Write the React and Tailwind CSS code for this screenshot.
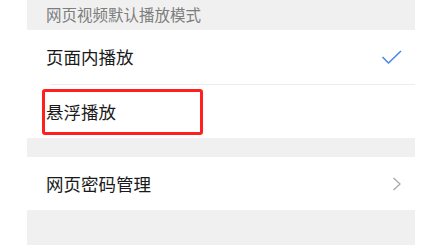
export default function App() {
  const font = { fontFamily: '"Noto Sans CJK SC", "Noto Sans", sans-serif' };
  return (
    <div className="w-[436px] h-[245px] bg-white overflow-hidden" style={font}>
      <div className="relative ml-[27px] w-[388px] h-[245px] bg-[#f0f0f0] flex flex-col">
        <div className="h-[30px] flex items-center pl-[19px] text-[15.5px] leading-none text-[#7d7d7d]">
          网页视频默认播放模式
        </div>
        <div className="bg-white">
          <div className="h-[54px] flex items-center justify-between pl-[19px] pr-[12px]">
            <span className="text-[17.5px] leading-none text-[#1a1a1a]">页面内播放</span>
            <svg width="22" height="16" viewBox="0 0 22 16" fill="none">
              <path d="M1.5 8 L7.5 14 L20 2" stroke="#4a86e8" strokeWidth="1.6" />
            </svg>
          </div>
          <div className="ml-[23px] h-px bg-[#ececec]" />
          <div className="h-[53px] flex items-center pl-[19px]">
            <span className="text-[17.5px] leading-none text-[#1a1a1a]">悬浮播放</span>
          </div>
        </div>
        <div className="h-[19px]" />
        <div className="bg-white h-[53px] flex items-center justify-between pl-[19px] pr-[13px]">
          <span className="text-[17.5px] leading-none text-[#1a1a1a]">网页密码管理</span>
          <svg width="10" height="14" viewBox="0 0 10 14" fill="none">
            <path d="M1.5 1 L8 7 L1.5 13" stroke="#a8a8a8" strokeWidth="1.3" />
          </svg>
        </div>
        <div className="absolute left-[15px] top-[89px] w-[161px] h-[46px] border-[3px] border-[#ff1f1f] rounded-[3px]" />
      </div>
    </div>
  );
}
